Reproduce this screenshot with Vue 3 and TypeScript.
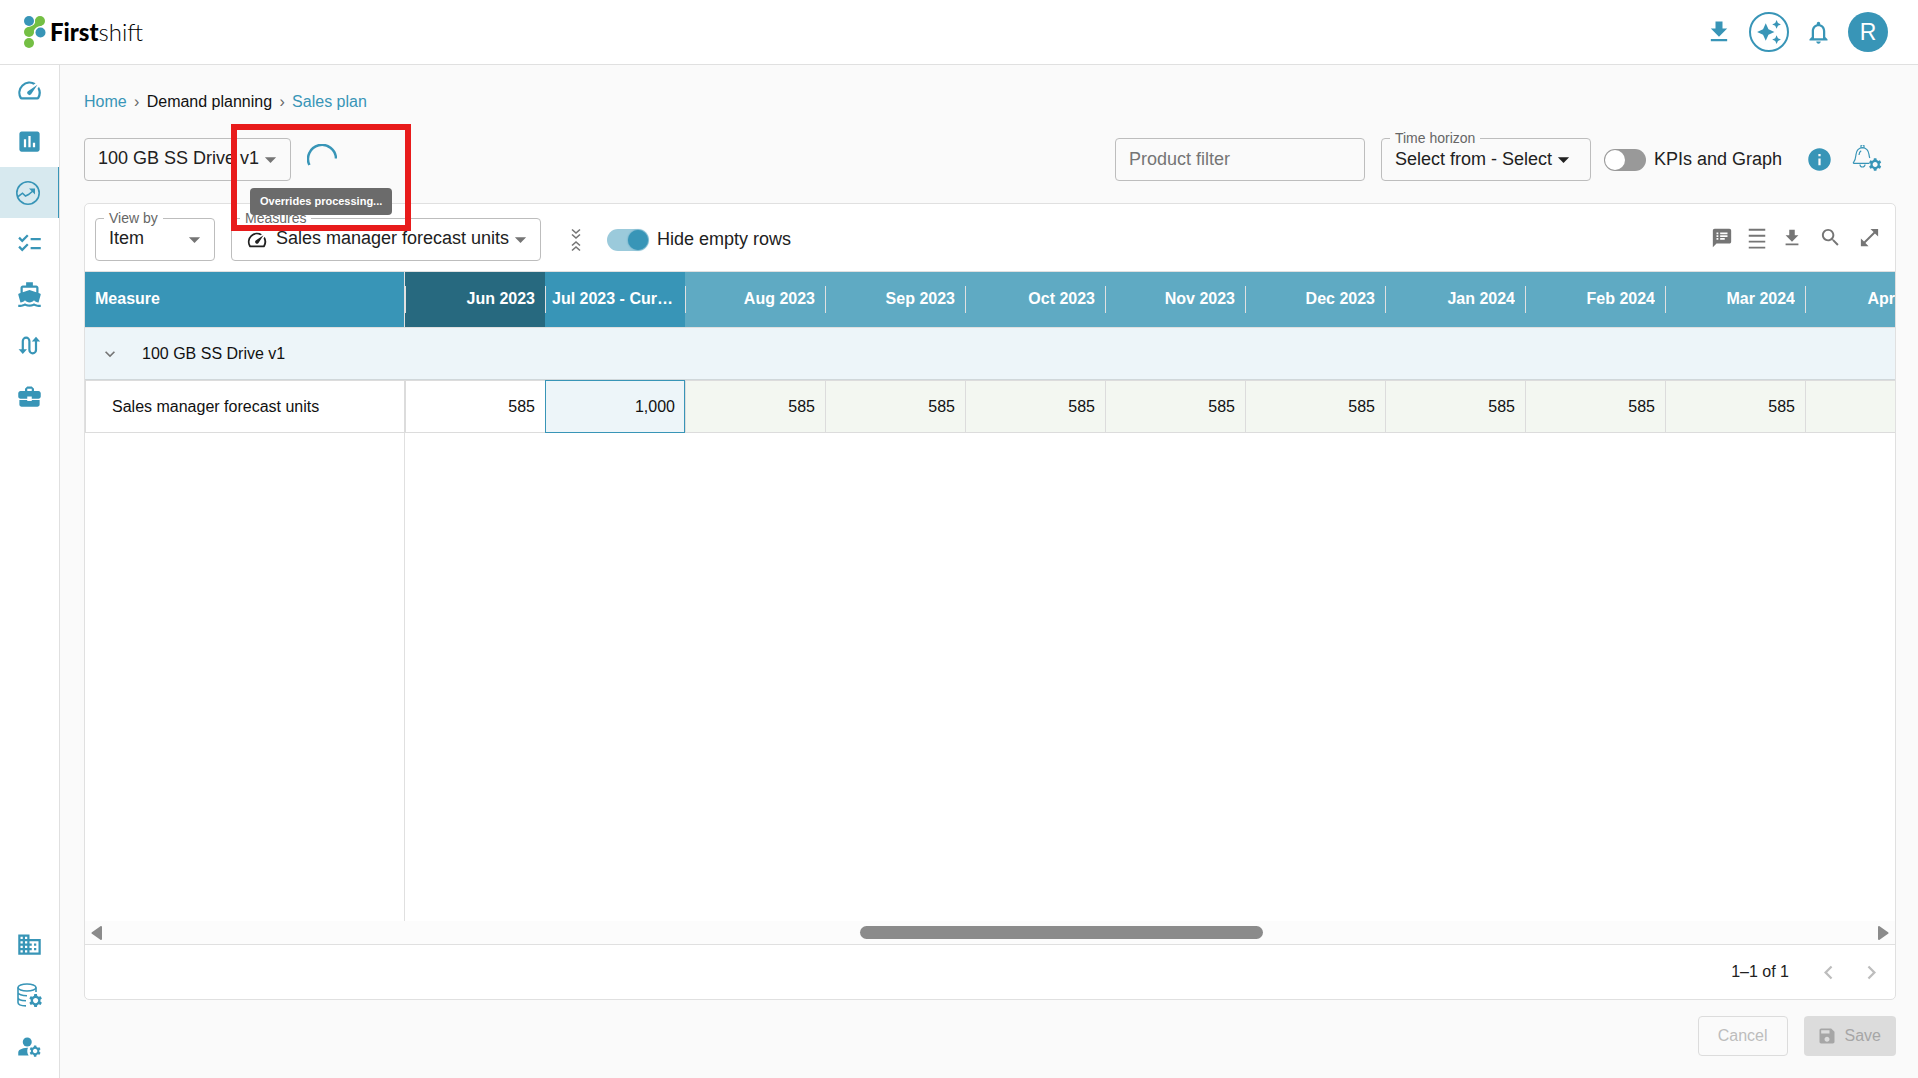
<script setup lang="ts">
import { ref } from 'vue'

interface NavItem {
  label: string
  paths: string[]
  kind?: 'fill' | 'trend' | 'route' | 'database'
  active?: boolean
}

interface Period {
  label: string
  value: string
  state: 'past' | 'current' | 'future'
}

const icons = {
  gauge:
    'M20.38 8.57l-1.23 1.85a8 8 0 0 1-.22 7.58H5.07A8 8 0 0 1 15.58 6.85l1.85-1.23A10 10 0 0 0 3.35 19a2 2 0 0 0 1.72 1h13.85a2 2 0 0 0 1.74-1 10 10 0 0 0-.27-10.44zm-9.79 6.84a2 2 0 0 0 2.83 0l5.66-8.49-8.49 5.66a2 2 0 0 0 0 2.83z',
  chart:
    'M19 3H5c-1.1 0-2 .9-2 2v14c0 1.1.9 2 2 2h14c1.1 0 2-.9 2-2V5c0-1.1-.9-2-2-2zM9 17H7v-7h2v7zm4 0h-2V7h2v10zm4 0h-2v-4h2v4z',
  checklist:
    'M22 7h-9v2h9V7zm0 8h-9v2h9v-2zM5.54 11L2 7.46l1.41-1.41 2.12 2.12 4.24-4.24 1.41 1.41L5.54 11zm0 8L2 15.46l1.41-1.41 2.12 2.12 4.24-4.24 1.41 1.41L5.54 19z',
  boat:
    'M20 21c-1.39 0-2.78-.47-4-1.32-2.44 1.71-5.56 1.71-8 0C6.78 20.53 5.39 21 4 21H2v2h2c1.38 0 2.74-.35 4-.99 2.52 1.29 5.48 1.29 8 0 1.26.65 2.62.99 4 .99h2v-2h-2zM3.95 19H4c1.6 0 3.02-.88 4-2 .98 1.12 2.4 2 4 2s3.02-.88 4-2c.98 1.12 2.4 2 4 2h.05l1.89-6.68c.08-.26.06-.54-.06-.78s-.34-.42-.6-.5L20 10.62V6c0-1.1-.9-2-2-2h-3V1H9v3H6c-1.1 0-2 .9-2 2v4.62l-1.29.42c-.26.08-.48.26-.6.5s-.15.52-.06.78L3.95 19zM6 6h12v3.97L12 8 6 9.97V6z',
  briefcase:
    'M10 16v-1H3.01L3 19c0 1.11.89 2 2 2h14c1.11 0 2-.89 2-2v-4h-7v1h-4zm10-9h-4.01V5l-2-2h-4l-2 2v2H4c-1.1 0-2 .9-2 2v3c0 1.11.89 2 2 2h6v-2h4v2h6c1.1 0 2-.9 2-2V9c0-1.1-.9-2-2-2zm-6 0h-4V5h4v2z',
  building:
    'M12 7V3H2v18h20V7H12zM6 19H4v-2h2v2zm0-4H4v-2h2v2zm0-4H4V9h2v2zm0-4H4V5h2v2zm4 12H8v-2h2v2zm0-4H8v-2h2v2zm0-4H8V9h2v2zm0-4H8V5h2v2zm10 12h-8v-2h2v-2h-2v-2h2v-2h-2V9h8v10zm-2-8h-2v2h2v-2zm0 4h-2v2h2v-2z',
  person: 'M10 4a4 4 0 1 0 0 8 4 4 0 0 0 0-8z',
  shoulders:
    'M10.67 13.02C10.45 13.01 10.23 13 10 13c-2.42 0-4.68.67-6.61 1.82-.88.52-1.39 1.5-1.39 2.53V20h9.26c-.79-1.13-1.26-2.51-1.26-4 0-1.07.25-2.07.67-2.98z',
  gear:
    'M20.75 16c0-.22-.03-.42-.06-.63l1.14-1.01-1-1.73-1.45.49c-.32-.27-.68-.48-1.08-.63L18 11h-2l-.3 1.49c-.4.15-.76.36-1.08.63l-1.45-.49-1 1.73 1.14 1.01c-.03.21-.06.41-.06.63s.03.42.06.63l-1.14 1.01 1 1.73 1.45-.49c.32.27.68.48 1.08.63L16 21h2l.3-1.49c.4-.15.76-.36 1.08-.63l1.45.49 1-1.73-1.14-1.01c.03-.21.06-.41.06-.63zM17 18c-1.1 0-2-.9-2-2s.9-2 2-2 2 .9 2 2-.9 2-2 2z',
  download: 'M5 20h14v-2H5v2zM19 9h-4V3H9v6H5l7 7 7-7z',
  sparkle:
    'M19 9l1.25-2.75L23 5l-2.75-1.25L19 1l-1.25 2.75L15 5l2.75 1.25L19 9zm-7.5.5L9 4 6.5 9.5 1 12l5.5 2.5L9 20l2.5-5.5L17 12l-5.5-2.5zM19 15l-1.25 2.75L15 19l2.75 1.25L19 23l1.25-2.75L23 19l-2.75-1.25L19 15z',
  bell:
    'M12 22c1.1 0 2-.9 2-2h-4c0 1.1.89 2 2 2zm6-6v-5c0-3.07-1.63-5.64-4.5-6.32V4c0-.83-.67-1.5-1.5-1.5s-1.5.67-1.5 1.5v.68C7.64 5.36 6 7.92 6 11v5l-2 2v1h16v-1l-2-2zm-2 1H8v-6c0-2.48 1.51-4.5 4-4.5s4 2.02 4 4.5v6z',
  info:
    'M12 2C6.48 2 2 6.48 2 12s4.48 10 10 10 10-4.48 10-10S17.52 2 12 2zm1 15h-2v-6h2v6zm0-8h-2V7h2v2z',
  caret: 'M7 10l5 5 5-5z',
  notes:
    'M20 2H4c-1.1 0-1.99.9-1.99 2L2 22l4-4h14c1.1 0 2-.9 2-2V4c0-1.1-.9-2-2-2zM8 14H6v-2h2v2zm0-3H6V9h2v2zm0-3H6V6h2v2zm7 6h-5v-2h5v2zm3-3h-8V9h8v2zm0-3h-8V6h8v2z',
  lines: 'M3 2h18v2H3zM3 8.500h18v2H3zM3 15h18v2H3zM3 21.500h18v2H3z',
  search:
    'M15.5 14h-.79l-.28-.27C15.41 12.59 16 11.11 16 9.5 16 5.91 13.09 3 9.5 3S3 5.91 3 9.5 5.91 16 9.5 16c1.61 0 3.09-.59 4.23-1.57l.27.28v.79l5 4.99L20.49 19l-4.99-5zm-6 0C7.01 14 5 11.99 5 9.5S7.01 5 9.5 5 14 7.01 14 9.5 11.99 14 9.5 14z',
  expand: 'M21 11V3h-8l3.29 3.29-10 10L3 13v8h8l-3.29-3.29 10-10z',
  save:
    'M17 3H5c-1.11 0-2 .9-2 2v14c0 1.1.89 2 2 2h14c1.1 0 2-.9 2-2V7l-4-4zm-5 16c-1.66 0-3-1.34-3-3s1.34-3 3-3 3 1.34 3 3-1.34 3-3 3zm3-10H5V5h10v4z',
  down: 'M7.41 8.59L12 13.17l4.59-4.58L18 10l-6 6-6-6 1.41-1.41z',
  left: 'M15.41 16.59L10.83 12l4.58-4.59L14 6l-6 6 6 6 1.41-1.41z',
  right: 'M8.59 16.59L13.17 12 8.59 7.41 10 6l6 6-6 6-1.41-1.41z',
}

const mainNav: NavItem[] = [
  { label: 'Dashboard', paths: [icons.gauge] },
  { label: 'Reports', paths: [icons.chart] },
  { label: 'Demand planning', paths: [], kind: 'trend', active: true },
  { label: 'Tasks', paths: [icons.checklist] },
  { label: 'Supply', paths: [icons.boat] },
  { label: 'Flows', paths: [], kind: 'route' },
  { label: 'Business', paths: [icons.briefcase] },
]

const adminNav: NavItem[] = [
  { label: 'Organization', paths: [icons.building] },
  { label: 'Data settings', paths: [], kind: 'database' },
  { label: 'User settings', paths: [icons.person, icons.shoulders, icons.gear] },
]

const navGroups = [mainNav, adminNav]

const periods: Period[] = [
  { label: 'Jun 2023', value: '585', state: 'past' },
  { label: 'Jul 2023 - Current', value: '1,000', state: 'current' },
  ...['Aug 2023', 'Sep 2023', 'Oct 2023', 'Nov 2023', 'Dec 2023', 'Jan 2024', 'Feb 2024', 'Mar 2024', 'Apr 2024'].map(
    (label): Period => ({ label, value: '585', state: 'future' }),
  ),
]

const tools = [
  { label: 'Comments', path: icons.notes, size: 22 },
  { label: 'Density', path: icons.lines, size: 22 },
  { label: 'Download', path: icons.download, size: 22 },
  { label: 'Search', path: icons.search, size: 23 },
  { label: 'Full screen', path: icons.expand, size: 23 },
]

const showKpis = ref(false)
const hideEmpty = ref(true)
const productFilter = ref('')
const scroll = { offset: '42.7%', size: '22.7%' }
</script>

<template>
  <div class="app">
    <header class="topbar">
      <a class="logo" href="#" aria-label="Firstshift">
        <svg width="22" height="34" viewBox="0 0 22 34" aria-hidden="true">
          <g fill="#74bf44">
            <circle cx="16" cy="6" r="5" />
            <circle cx="5" cy="17" r="5" />
            <circle cx="5" cy="28" r="5" />
            <path d="M11.6 3.8C12 9 9 11.500 3.500 12.300L9 19.500C9.500 14 12.500 11.600 18 10.600z" />
          </g>
          <g fill="#3895b7">
            <circle cx="5" cy="6" r="5" />
            <circle cx="16.500" cy="17.500" r="5" />
          </g>
        </svg>
        <span class="wordmark"><b>First</b>shift</span>
      </a>
      <div class="actions">
        <button class="icon-btn" aria-label="Downloads">
          <svg width="28" height="28" viewBox="0 0 24 24"><path :d="icons.download" /></svg>
        </button>
        <button class="icon-btn assistant" aria-label="Assistant">
          <svg width="26" height="26" viewBox="0 0 24 24"><path :d="icons.sparkle" /></svg>
        </button>
        <button class="icon-btn" aria-label="Notifications">
          <svg width="27" height="27" viewBox="0 0 24 24"><path :d="icons.bell" /></svg>
        </button>
        <button class="avatar" aria-label="Account">R</button>
      </div>
    </header>

    <div class="body">
      <nav class="sidebar" aria-label="Main">
        <div v-for="(group, g) in navGroups" :key="g">
          <a
            v-for="item in group"
            :key="item.label"
            href="#"
            class="nav-item"
            :class="{ active: item.active }"
            :aria-label="item.label"
          >
            <svg v-if="item.kind === 'trend'" class="trend" width="26" height="26" viewBox="0 0 26 26">
              <circle cx="13" cy="13" r="11.200" class="line" />
              <path class="line" d="M2.500 17L7.500 13.200L10.500 16L13.500 14.500L18.500 10.500" />
              <path d="M14 8.500h6v6z" />
            </svg>
            <svg v-else-if="item.kind === 'route'" width="27" height="27" viewBox="0 0 27 27">
              <path class="line thick" d="M6.800 19V9a3.300 3.300 0 0 1 6.600 0v9a3.300 3.300 0 0 0 6.600 0V8" />
              <path d="M2.600 17.200h8.400l-4.200 4.800zM15.800 9.500h8.400l-4.200-4.800z" />
            </svg>
            <svg v-else-if="item.kind === 'database'" width="27" height="27" viewBox="0 1 27 27">
              <ellipse cx="11" cy="6.500" rx="9" ry="3.500" class="line" />
              <path
                class="line"
                d="M2 6.500v15c0 1.800 3 3.300 8 3.400M20 6.500v4.500M2 11.500c0 1.800 4 3.300 9 3.300M2 16.500c0 1.800 3.500 3.200 8 3.300"
              />
              <path transform="translate(-2.500 -1.200) scale(1.300)" :d="icons.gear" />
            </svg>
            <svg v-else width="27" height="27" viewBox="0 0 24 24">
              <path v-for="p in item.paths" :key="p" :d="p" />
            </svg>
          </a>
        </div>
      </nav>

      <main class="content">
        <nav class="crumbs" aria-label="Breadcrumb">
          <a href="#">Home</a><span class="sep">›</span><span>Demand planning</span><span class="sep">›</span
          ><a href="#">Sales plan</a>
        </nav>

        <div class="filters">
          <div class="field product">
            <select aria-label="Product">
              <option>100 GB SS Drive v1</option>
            </select>
            <svg class="caret" width="27" height="27" viewBox="0 0 24 24"><path :d="icons.caret" /></svg>
          </div>

          <div class="progress">
            <svg width="30" height="30" viewBox="0 0 30 30" role="img" aria-label="Loading">
              <path d="M2.400 21A14 14 0 1 1 29 14.500" fill="none" stroke="#3895b7" stroke-width="2.500" />
            </svg>
            <div class="tooltip" role="tooltip">Overrides processing...</div>
            <div class="highlight"></div>
          </div>

          <div class="field search">
            <input v-model="productFilter" type="text" placeholder="Product filter" aria-label="Product filter" />
          </div>
          <div class="field horizon">
            <label for="horizon">Time horizon</label>
            <select id="horizon">
              <option>Select from - Select</option>
            </select>
            <svg class="caret" width="27" height="27" viewBox="0 0 24 24"><path :d="icons.caret" /></svg>
          </div>
          <label class="switch">
            <input v-model="showKpis" type="checkbox" />
            <span>KPIs and Graph</span>
          </label>
          <button class="icon-btn info" aria-label="Information">
            <svg width="27" height="27" viewBox="0 0 24 24"><path :d="icons.info" /></svg>
          </button>
          <button class="icon-btn" aria-label="Alert settings">
            <svg width="30" height="30" viewBox="0 2 30 30">
              <path
                class="line thin"
                d="M17.500 20.300H2c-.8 0-.8-.6-.3-1.200C3.500 17 3.600 15 4 11.500C4.400 7.500 6.500 5 10.500 4.600C14.500 5 16.500 7.500 17 11.500C17.200 13.200 17.400 14 17.800 15M9 4.500V3.200a1.500 1.500 0 0 1 3 0V4.500M8 21.500a2.500 2.500 0 0 0 5 0M7 12c.1-2 .8-3.500 2.200-4.300"
              />
              <path transform="translate(1.900 1.500) scale(1.250)" :d="icons.gear" />
            </svg>
          </button>
        </div>

        <section class="panel">
          <div class="toolbar">
            <div class="field view">
              <label for="view">View by</label>
              <select id="view">
                <option>Item</option>
              </select>
              <svg class="caret" width="27" height="27" viewBox="0 0 24 24"><path :d="icons.caret" /></svg>
            </div>
            <div class="field measures">
              <label for="measures">Measures</label>
              <svg class="lead" width="22" height="22" viewBox="0 0 24 24"><path :d="icons.gauge" /></svg>
              <select id="measures">
                <option>Sales manager forecast units</option>
              </select>
              <svg class="caret" width="27" height="27" viewBox="0 0 24 24"><path :d="icons.caret" /></svg>
            </div>
            <button class="icon-btn grey collapse" aria-label="Collapse rows">
              <svg width="12" height="24" viewBox="0 0 12 24">
                <path class="line" d="M2 1.500l4 3.500 4-3.500M2 6.500l4 3.500 4-3.500M2 17.500l4-3.500 4 3.500M2 22.500l4-3.500 4 3.500" />
              </svg>
            </button>
            <label class="switch">
              <input v-model="hideEmpty" type="checkbox" />
              <span>Hide empty rows</span>
            </label>
            <div class="tools">
              <button
                v-for="t in tools"
                :key="t.label"
                class="icon-btn grey"
                :class="{ wide: t.size > 22 }"
                :aria-label="t.label"
              >
                <svg :width="t.size" :height="t.size" viewBox="0 0 24 24"><path :d="t.path" /></svg>
              </button>
            </div>
          </div>

          <div class="grid">
            <table>
              <thead>
                <tr>
                  <th class="first" scope="col">Measure</th>
                  <th v-for="p in periods" :key="p.label" :class="p.state" scope="col">
                    <div>{{ p.label }}</div>
                  </th>
                </tr>
              </thead>
              <tbody>
                <tr class="group">
                  <td :colspan="periods.length + 1">
                    <div>
                      <button class="icon-btn grey" aria-label="Toggle group">
                        <svg width="20" height="20" viewBox="0 0 24 24"><path :d="icons.down" /></svg>
                      </button>
                      <span>100 GB SS Drive v1</span>
                    </div>
                  </td>
                </tr>
                <tr class="data">
                  <td class="first">Sales manager forecast units</td>
                  <td v-for="p in periods" :key="p.label" :class="p.state">{{ p.value }}</td>
                </tr>
              </tbody>
            </table>
            <div class="rest"></div>
          </div>

          <div class="scrollbar" aria-hidden="true">
            <svg width="12" height="14" viewBox="0 0 12 14">
              <path d="M10 1v12L1.500 7z" />
            </svg>
            <div class="track">
              <div class="thumb" :style="{ marginLeft: scroll.offset, width: scroll.size }"></div>
            </div>
            <svg width="12" height="14" viewBox="0 0 12 14">
              <path d="M2 1v12L10.500 7z" />
            </svg>
          </div>

          <div class="pager">
            <span>1–1 of 1</span>
            <button class="icon-btn off" aria-label="Previous page" disabled>
              <svg width="27" height="27" viewBox="0 0 24 24"><path :d="icons.left" /></svg>
            </button>
            <button class="icon-btn off" aria-label="Next page" disabled>
              <svg width="27" height="27" viewBox="0 0 24 24"><path :d="icons.right" /></svg>
            </button>
          </div>
        </section>

        <div class="footer">
          <button class="btn outline" disabled>Cancel</button>
          <button class="btn solid" disabled>
            <svg width="20" height="20" viewBox="0 0 24 24"><path :d="icons.save" /></svg>
            Save
          </button>
        </div>
      </main>
    </div>
  </div>
</template>

<style>
body {
  margin: 0;
  background: #fafafa;
}
</style>

<style scoped>
.app {
  display: flex;
  flex-direction: column;
  min-height: 100vh;
  overflow: hidden;
  font-family: 'Liberation Sans', Arial, sans-serif;
  font-size: 16px;
  line-height: 24px;
  color: #212121;
}
*,
*::before {
  box-sizing: border-box;
}
button,
input,
select {
  font: inherit;
  color: inherit;
}
a {
  color: #3895b7;
  text-decoration: none;
}
svg {
  display: block;
  flex: none;
  fill: currentColor;
}
.line {
  fill: none;
  stroke: currentColor;
  stroke-width: 1.6;
}
.thick {
  stroke-width: 2.2;
}
.thin {
  stroke-width: 1.2;
}

.topbar {
  display: flex;
  align-items: center;
  justify-content: space-between;
  height: 65px;
  padding: 0 30px 0 24px;
  border-bottom: 1px solid #e0e0e0;
  background: #fff;
}
.logo {
  display: flex;
  align-items: center;
  gap: 4px;
  color: #000;
}
.wordmark {
  font-family: Lato, sans-serif;
  font-size: 24px;
  font-weight: 300;
}
.wordmark b {
  font-weight: 900;
}
.actions {
  display: flex;
  align-items: center;
  gap: 16px;
}
.icon-btn {
  display: flex;
  align-items: center;
  justify-content: center;
  padding: 0;
  border: 0;
  background: none;
  color: #3895b7;
}
.assistant {
  width: 40px;
  height: 40px;
  border: 2px solid #3895b7;
  border-radius: 50%;
}
.avatar {
  width: 40px;
  height: 40px;
  padding: 0;
  border: 0;
  border-radius: 50%;
  background: #3895b7;
  color: #fff;
  font-size: 23px;
}

.body {
  display: flex;
  flex: 1;
}
.sidebar {
  display: flex;
  flex: none;
  flex-direction: column;
  justify-content: space-between;
  width: 60px;
  padding-bottom: 6px;
  border-right: 1px solid #e0e0e0;
  background: #fff;
}
.nav-item {
  display: flex;
  align-items: center;
  justify-content: center;
  height: 51px;
}
.nav-item.active {
  padding-right: 2px;
  border-right: 1px solid #3895b7;
  background: #d7e9ef;
}

.content {
  display: flex;
  flex: 1;
  flex-direction: column;
  min-width: 0;
  padding: 25px 22px 22px 24px;
}
.crumbs {
  display: flex;
  margin-bottom: 24px;
  color: #111;
}
.sep {
  width: 20px;
  text-align: center;
  color: #666;
}

.filters {
  display: flex;
  align-items: center;
  margin-bottom: 22px;
}
.field {
  position: relative;
  display: flex;
  align-items: center;
  height: 43px;
  border: 1px solid #bdbdbd;
  border-radius: 4px;
  font-size: 18px;
}
.field select,
.field input {
  width: 100%;
  height: 100%;
  padding: 0 28px 3px 13px;
  border: 0;
  outline: 0;
  background: none;
  appearance: none;
}
.field input {
  padding: 0 13px;
}
.field input::placeholder {
  color: #757575;
  opacity: 1;
}
.field label {
  position: absolute;
  top: -9px;
  left: 8px;
  padding: 0 5px;
  background: #fafafa;
  color: #666;
  font-size: 14px;
  line-height: 16px;
}
.panel .field label {
  background: #fff;
}
.caret {
  position: absolute;
  right: 6px;
  color: #757575;
  pointer-events: none;
}
.product {
  width: 207px;
}
.search {
  width: 250px;
  margin-left: auto;
}
.horizon {
  width: 210px;
  margin: 0 13px 0 16px;
}
.field.horizon select {
  padding-bottom: 2px;
}
.horizon .caret {
  right: 13px;
  color: #212121;
}
.progress {
  position: relative;
  margin: 0 0 2px 16px;
}
.tooltip {
  position: absolute;
  z-index: 2;
  top: 44px;
  left: -57px;
  padding: 0 10px;
  border-radius: 4px;
  background: #6b6b6b;
  color: #fff;
  font-size: 11px;
  font-weight: 700;
  line-height: 27px;
  white-space: nowrap;
}
.highlight {
  position: absolute;
  z-index: 1;
  top: -20px;
  left: -76px;
  width: 180px;
  height: 107px;
  border: 6px solid #e81b1b;
  pointer-events: none;
}

.switch {
  display: flex;
  align-items: center;
  gap: 8px;
  font-size: 18px;
}
.switch span {
  padding-bottom: 2px;
}
.switch input {
  display: flex;
  width: 42px;
  height: 22px;
  margin: 0;
  border-radius: 11px;
  background: #999;
  appearance: none;
}
.switch input::before {
  width: 20px;
  height: 20px;
  margin: 1px;
  border-radius: 50%;
  background: #fff;
  content: '';
}
.switch input:checked {
  justify-content: flex-end;
  background: #9bcadb;
}
.switch input:checked::before {
  background: #3895b7;
  box-shadow: 0 0 2px #3895b7;
}
.info {
  margin: 0 19px 0 24px;
}
.info + .icon-btn {
  margin-right: 14px;
}

.panel {
  display: flex;
  flex: 1;
  flex-direction: column;
  border: 1px solid #e0e0e0;
  border-radius: 5px;
  background: #fff;
}
.toolbar {
  display: flex;
  align-items: center;
  padding: 14px 14px 10px 10px;
  border-bottom: 1px solid #e0e0e0;
}
.view {
  width: 120px;
  margin-right: 16px;
}
.measures {
  width: 310px;
  padding-left: 14px;
}
.field.measures select {
  padding-left: 8px;
}
.grey {
  color: #757575;
}
.collapse {
  margin: 0 25px 0 29px;
}
.tools {
  display: flex;
  align-items: center;
  gap: 13px;
  margin: 0 0 4px auto;
}
.wide {
  padding-left: 3px;
}

.grid {
  display: flex;
  flex: 1;
  flex-direction: column;
  overflow: hidden;
}
table {
  width: 1860px;
  table-layout: fixed;
  border-spacing: 0;
  color: #111;
}
th,
td {
  padding: 0 10px 0 7px;
  text-align: right;
}
th {
  height: 56px;
  padding-bottom: 2px;
  border-bottom: 1px solid #e0e0e0;
  color: #fff;
}
th.first {
  width: 320px;
  padding-left: 10px;
  border-right: 1px solid #e0e0e0;
  background: #3895b7;
  text-align: left;
}
th div {
  overflow: hidden;
  text-overflow: ellipsis;
  white-space: nowrap;
}
th:not(.first) {
  background-image: linear-gradient(#e0e0e0, #e0e0e0);
  background-position: left center;
  background-repeat: no-repeat;
  background-size: 1px 27px;
}
th.past {
  background-color: #27697f;
}
th.current {
  background-color: #3895b7;
}
th.future {
  background-color: #5faac3;
}
.group td {
  height: 52px;
  padding: 0 10px;
  border-bottom: 1px solid #d0d7da;
  background: #edf5f9;
}
.group td div {
  display: flex;
  align-items: center;
}
.group span {
  margin-left: 22px;
}
.group button {
  padding-left: 5px;
}
.data td {
  height: 53px;
  border: solid #dcdcdc;
  border-width: 1px 0 1px 1px;
}
.data td.first {
  padding-left: 26px;
  border-right-width: 1px;
  text-align: left;
}
.data td.current {
  padding-right: 9px;
  border: 1px solid #3895b7;
  background: #edf5f9;
}
.data td.future {
  background: #f3f7f1;
}
.rest {
  flex: 1;
  width: 320px;
  border-right: 1px solid #e0e0e0;
}

.scrollbar {
  display: flex;
  align-items: center;
  height: 24px;
  padding: 0 6px;
  border-bottom: 1px solid #e0e0e0;
  background: #fcfcfc;
  color: #8b8b8b;
}
.scrollbar path {
  stroke: currentColor;
  stroke-width: 2;
  stroke-linejoin: round;
}
.track {
  flex: 1;
}
.thumb {
  height: 13px;
  border-radius: 7px;
  background: #8b8b8b;
}
.pager {
  display: flex;
  align-items: center;
  justify-content: flex-end;
  gap: 16px;
  height: 54px;
  padding-right: 10px;
}
.pager span {
  margin-right: 10px;
}
.off {
  color: #bdbdbd;
}

.footer {
  display: flex;
  justify-content: flex-end;
  gap: 16px;
  margin-top: 16px;
}
.btn {
  display: flex;
  align-items: center;
  justify-content: center;
  gap: 8px;
  height: 40px;
  padding: 0 15px 0 13px;
  border: 0;
  border-radius: 4px;
}
.outline {
  padding: 0 19px;
  border: 1px solid #dcdcdc;
  background: none;
  color: #bdbdbd;
}
.solid {
  background: #dcdcdc;
  color: #a6a6a6;
}
</style>
